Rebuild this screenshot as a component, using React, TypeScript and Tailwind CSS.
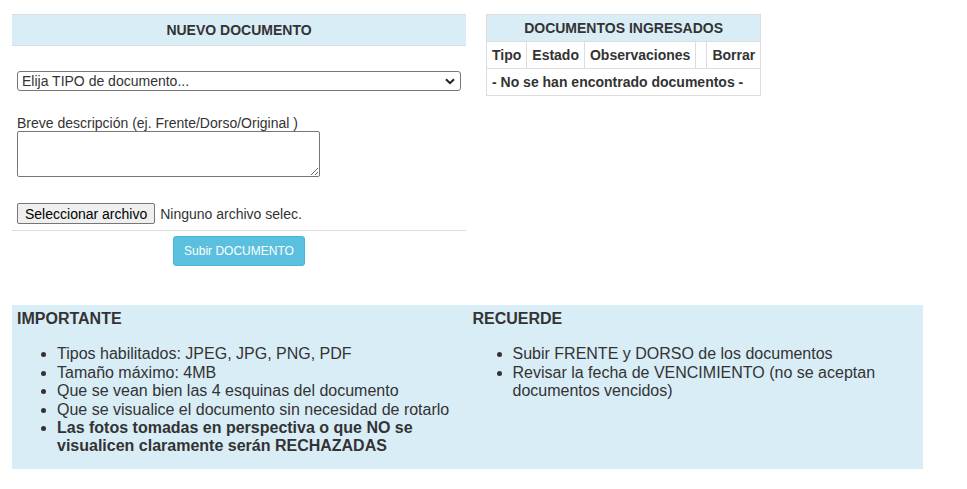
import React from "react";

export default function App() {
  return (
    <div className="min-h-[489px] bg-white text-[#333] font-['Liberation_Sans',Arial,sans-serif] text-[14px] leading-[16px]">
      <div className="flex pl-[12px] pt-[14px]">
        {/* Left panel */}
        <div className="w-[454px] flex flex-col">
          <div className="h-[32px] border-y border-[#dddddd] bg-[#d9edf7] flex items-center justify-center font-bold">
            NUEVO DOCUMENTO
          </div>
          <div className="mt-[25px] mx-[5px] h-[20px] border border-[#767676] rounded-[3px] bg-white flex items-center justify-between pl-[4px] pr-[4px]">
            <span>Elija TIPO de documento...</span>
            <svg width="10" height="7" viewBox="0 0 10 7" className="mr-[1px]">
              <path d="M1 1.2 L5 5.2 L9 1.2" fill="none" stroke="#222" strokeWidth="2" />
            </svg>
          </div>
          <div className="mt-[24px] px-[5px]">Breve descripción (ej. Frente/Dorso/Original )</div>
          <div className="px-[5px] flex">
            <textarea className="w-[303px] h-[46px] border border-[#767676] rounded-[2px] bg-white outline-none" />
          </div>
          <div className="mt-[26px] px-[5px] flex items-center">
            <button className="h-[21px] px-[7px] bg-[#efefef] border border-[#767676] rounded-[2px] text-black text-[14px] leading-[16px]">
              Seleccionar archivo
            </button>
            <span className="ml-[5px] text-[#333]">Ninguno archivo selec.</span>
          </div>
          <div className="mt-[6px] border-t border-[#dddddd] flex justify-center pt-[5px]">
            <button className="h-[30px] px-[10px] bg-[#5bc0de] border border-[#46b8da] rounded-[3px] text-white text-[12px] leading-[18px]">
              Subir DOCUMENTO
            </button>
          </div>
        </div>

        {/* Right table */}
        <div className="ml-[20px]">
          <table className="border-collapse border border-[#dddddd] leading-[16px]">
            <thead>
              <tr>
                <th colSpan={5} className="bg-[#d9edf7] border border-[#dddddd] p-[5px] text-center font-bold">
                  DOCUMENTOS INGRESADOS
                </th>
              </tr>
            </thead>
            <tbody>
              <tr className="font-bold">
                <td className="border border-[#dddddd] p-[5px]">Tipo</td>
                <td className="border border-[#dddddd] p-[5px]">Estado</td>
                <td className="border border-[#dddddd] p-[5px]">Observaciones</td>
                <td className="border border-[#dddddd] p-[5px]"></td>
                <td className="border border-[#dddddd] p-[5px]">Borrar</td>
              </tr>
              <tr>
                <td colSpan={5} className="border border-[#dddddd] p-[5px] font-bold text-left">
                  - No se han encontrado documentos -
                </td>
              </tr>
            </tbody>
          </table>
        </div>
      </div>

      {/* Bottom info box */}
      <div className="mt-[39px] ml-[12px] w-[911px] h-[164px] bg-[#d9edf7] flex text-[16px] leading-[18.4px]">
        <div className="w-1/2 p-[5px]">
          <div className="font-bold">IMPORTANTE</div>
          <ul className="list-disc pl-[40px] mt-[17px]">
            <li>Tipos habilitados: JPEG, JPG, PNG, PDF</li>
            <li>Tamaño máximo: 4MB</li>
            <li>Que se vean bien las 4 esquinas del documento</li>
            <li>Que se visualice el documento sin necesidad de rotarlo</li>
            <li className="font-bold">Las fotos tomadas en perspectiva o que NO se visualicen claramente serán RECHAZADAS</li>
          </ul>
        </div>
        <div className="w-1/2 p-[5px]">
          <div className="font-bold">RECUERDE</div>
          <ul className="list-disc pl-[40px] mt-[17px]">
            <li>Subir FRENTE y DORSO de los documentos</li>
            <li>Revisar la fecha de VENCIMIENTO (no se aceptan documentos vencidos)</li>
          </ul>
        </div>
      </div>
    </div>
  );
}
